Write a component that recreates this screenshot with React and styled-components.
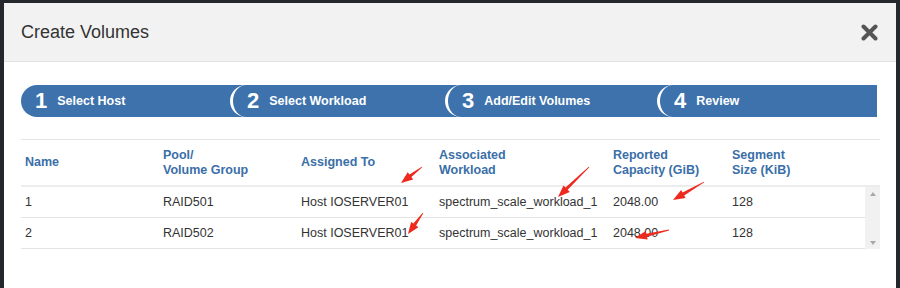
import React from 'react';
import styled, { createGlobalStyle } from 'styled-components';

const GlobalStyle = createGlobalStyle`
  html, body { margin: 0; padding: 0; }
  body {
    background: #24282c;
    font-family: "Liberation Sans", Arial, sans-serif;
    width: 900px;
    height: 288px;
    overflow: hidden;
  }
`;

const Page = styled.div`
  position: relative;
  padding: 3px 4px 0 4px;
  height: 285px;
`;

const Modal = styled.div`
  background: #fff;
  height: 100%;
`;

const Header = styled.div`
  height: 59px;
  background: #f2f2f2;
  border-bottom: 1px solid #e2e2e2;
  display: flex;
  align-items: center;
  justify-content: space-between;
  padding: 1px 18px 0 17px;
  box-sizing: border-box;
`;

const Title = styled.h4`
  margin: 0;
  font-size: 18px;
  font-weight: normal;
  color: #333;
`;

const Close = styled.button`
  border: 0;
  background: none;
  padding: 0;
  width: 17px;
  height: 17px;
  display: flex;
`;

const Body = styled.div`
  padding: 23px 16px 0 17px;
`;

const Steps = styled.div`
  display: flex;
  height: 32px;
  margin-right: 3px;
`;

const Step = styled.div`
  box-sizing: border-box;
  display: flex;
  align-items: center;
  gap: 10px;
  height: 32px;
  background: #3d72ac;
  color: #fff;
  border-radius: 16px 0 0 16px;
  padding-left: 14px;
  border-left: ${(p) => (p.$first ? 'none' : '3px solid #fff')};
  margin-left: ${(p) => (p.$first ? '0' : '-16px')};
  width: ${(p) => p.$w || 'auto'};
  flex: ${(p) => (p.$w ? 'none' : '1')};
`;

const StepNum = styled.span`
  font-size: 22px;
  font-weight: bold;
  line-height: 1;
`;

const StepLabel = styled.span`
  font-size: 12.5px;
  font-weight: bold;
`;

const Table = styled.div`
  margin-top: 22px;
  border-top: 1px solid #e4e4e4;
  font-size: 12.5px;
`;

const cols = '138px 138px 138px 174px 119px 1fr';

const HeadRow = styled.div`
  display: grid;
  grid-template-columns: ${cols};
  align-items: center;
  height: 45px;
  border-bottom: 2px solid #ececec;
`;

const HeadCell = styled.div`
  padding-left: 4px;
  color: #3a6fa8;
  font-weight: bold;
  line-height: 15px;
`;

const BodyWrap = styled.div`
  display: flex;
`;

const Rows = styled.div`
  flex: 1;
`;

const Row = styled.div`
  display: grid;
  grid-template-columns: ${cols};
  align-items: center;
  height: 30px;
  border-bottom: 1px solid #e4e4e4;
`;

const Cell = styled.div`
  padding-left: 4px;
  color: #333;
`;

const Scroll = styled.div`
  width: 15px;
  background: #f1f1f1;
  display: flex;
  flex-direction: column;
  justify-content: space-between;
  align-items: center;
  padding: 5px 0 4px;
  box-sizing: border-box;
`;

const Arrow = styled.div`
  width: 0;
  height: 0;
  border-left: 3.5px solid transparent;
  border-right: 3.5px solid transparent;
  ${(p) => (p.$up ? 'border-bottom: 4px solid #a8a8a8;' : 'border-top: 4px solid #a8a8a8;')}
`;

const Overlay = styled.svg`
  position: absolute;
  left: 0;
  top: 0;
  pointer-events: none;
`;

const steps = [
  { n: 1, label: 'Select Host', w: '225px' },
  { n: 2, label: 'Select Workload', w: '231px' },
  { n: 3, label: 'Add/Edit Volumes', w: '228px' },
  { n: 4, label: 'Review' },
];

const heads = [
  ['Name'],
  ['Pool/', 'Volume Group'],
  ['Assigned To'],
  ['Associated', 'Workload'],
  ['Reported', 'Capacity (GiB)'],
  ['Segment', 'Size (KiB)'],
];

const rows = [
  ['1', 'RAID501', 'Host IOSERVER01', 'spectrum_scale_workload_1', '2048.00', '128'],
  ['2', 'RAID502', 'Host IOSERVER01', 'spectrum_scale_workload_1', '2048.00', '128'],
];

// red annotation arrows: tail -> tip
const marks = [
  [422, 167, 401, 183],
  [423, 213, 408, 234],
  [589, 167, 558, 197],
  [704, 182, 673, 200],
  [669, 230, 635, 238],
];

function arrowPoints([x1, y1, x2, y2]) {
  const dx = x2 - x1;
  const dy = y2 - y1;
  const len = Math.hypot(dx, dy);
  const ux = dx / len;
  const uy = dy / len;
  const px = -uy;
  const py = ux;
  const head = Math.min(12, len * 0.45);
  const bx = x2 - ux * head;
  const by = y2 - uy * head;
  const p = (x, y, s) => `${(x + px * s).toFixed(1)},${(y + py * s).toFixed(1)}`;
  return [
    p(x1, y1, 0.4),
    p(bx, by, 1.6),
    p(bx, by, 4.5),
    `${x2},${y2}`,
    p(bx, by, -4.5),
    p(bx, by, -1.6),
    p(x1, y1, -0.4),
  ].join(' ');
}

export default function App() {
  return (
    <>
      <GlobalStyle />
      <Page>
        <Modal>
          <Header>
            <Title>Create Volumes</Title>
            <Close aria-label="close">
              <svg width="17" height="17" viewBox="0 0 17 17">
                <path d="M2.5 2.5 L14.5 14.5 M14.5 2.5 L2.5 14.5" stroke="#555" strokeWidth="4" strokeLinecap="round" />
              </svg>
            </Close>
          </Header>
          <Body>
            <Steps>
              {steps.map((s, i) => (
                <Step key={s.n} $first={i === 0} $w={s.w}>
                  <StepNum>{s.n}</StepNum>
                  <StepLabel>{s.label}</StepLabel>
                </Step>
              ))}
            </Steps>
            <Table>
              <HeadRow>
                {heads.map((h) => (
                  <HeadCell key={h.join()}>
                    {h.map((line) => (
                      <div key={line}>{line}</div>
                    ))}
                  </HeadCell>
                ))}
              </HeadRow>
              <BodyWrap>
                <Rows>
                  {rows.map((r) => (
                    <Row key={r[0]}>
                      {r.map((c, i) => (
                        <Cell key={i}>{c}</Cell>
                      ))}
                    </Row>
                  ))}
                </Rows>
                <Scroll>
                  <Arrow $up />
                  <Arrow />
                </Scroll>
              </BodyWrap>
            </Table>
          </Body>
        </Modal>
        <Overlay width="900" height="288">
          {marks.map((m, i) => (
            <polygon key={i} points={arrowPoints(m)} fill="#ee2a1f" />
          ))}
        </Overlay>
      </Page>
    </>
  );
}
